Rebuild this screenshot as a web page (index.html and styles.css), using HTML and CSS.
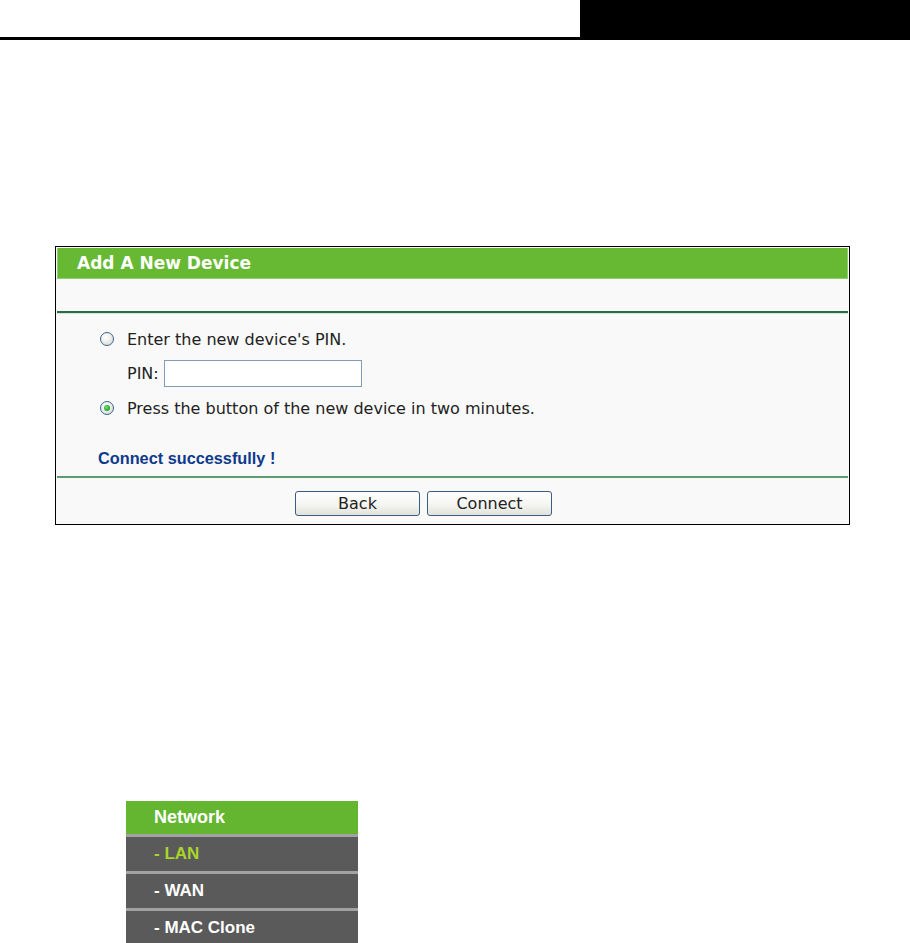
FILE: index.html
```html
<!DOCTYPE html>
<html>
<head>
<meta charset="utf-8">
<link rel="stylesheet" href="styles.css">
</head>
<body>
<div class="topbar">
  <div class="rule"></div>
  <div class="tab"></div>
</div>

<div class="panel">
  <div class="panel-head">Add A New Device</div>
  <div class="panel-sub"></div>
  <div class="options">
    <div class="opt-row">
      <span class="radio"></span>
      <span class="opt-text">Enter the new device's PIN.</span>
    </div>
    <div class="opt-row pin-row">
      <span class="opt-text">PIN:</span>
      <span class="pin-input"></span>
    </div>
    <div class="opt-row">
      <span class="radio checked"></span>
      <span class="opt-text">Press the button of the new device in two minutes.</span>
    </div>
  </div>
  <div class="status">Connect successfully !</div>
  <div class="actions">
    <button class="btn">Back</button>
    <button class="btn">Connect</button>
  </div>
</div>

<div class="menu">
  <div class="menu-head">Network</div>
  <div class="menu-item active">- LAN</div>
  <div class="menu-item">- WAN</div>
  <div class="menu-item">- MAC Clone</div>
</div>
</body>
</html>
```

FILE: styles.css
```css
html, body {
  margin: 0;
  padding: 0;
  background: #ffffff;
}

body {
  font-family: "DejaVu Sans", sans-serif;
  font-size: 16px;
  color: #222222;
  overflow: hidden;
}

.topbar {
  display: flex;
  height: 40px;
}

.topbar .rule {
  width: 580px;
  height: 37px;
  border-bottom: 3px solid #000;
}

.topbar .tab {
  width: 330px;
  height: 40px;
  background: #000;
}

.panel {
  box-sizing: border-box;
  width: 795px;
  margin: 206px 0 0 55px;
  border: 1px solid #000;
  padding: 1px;
  background: #f9f9f9;
}

.panel-head {
  height: 31px;
  display: flex;
  align-items: center;
  padding-left: 19px;
  background: #67b934;
  color: #ffffff;
  font-family: "DejaVu Sans", sans-serif;
  font-weight: bold;
  font-size: 17px;
  border: 1px solid #8fd06a;
  border-top: none;
  box-sizing: border-box;
}

.panel-sub {
  height: 32px;
  border-bottom: 2px solid #2b6b4c;
  box-shadow: 0 1px 0 #cfe6d6;
}

.options {
  display: flex;
  flex-direction: column;
  gap: 4.5px;
  padding: 11px 0 0 43px;
}

.opt-row {
  height: 30px;
  display: flex;
  align-items: center;
}

.pin-row {
  padding-left: 27px;
}

.radio {
  box-sizing: border-box;
  width: 14px;
  height: 14px;
  border-radius: 50%;
  border: 1px solid #3a6690;
  background: radial-gradient(circle at 40% 35%, #ffffff 0%, #eeeeea 45%, #cfcfc8 100%);
  margin-right: 13px;
  display: flex;
  align-items: center;
  justify-content: center;
}

.radio.checked::after {
  content: "";
  width: 6px;
  height: 6px;
  border-radius: 50%;
  background: radial-gradient(circle at 40% 40%, #6ee06a 0%, #22a52a 70%);
}

.opt-text {
  white-space: nowrap;
}

.pin-input {
  box-sizing: border-box;
  width: 198px;
  height: 27px;
  margin-left: 5px;
  border: 1px solid #7f9db9;
  background: #ffffff;
}

.status {
  margin-top: 25px;
  padding-left: 41px;
  height: 20px;
  line-height: 20px;
  font-family: "Liberation Sans", Arial, sans-serif;
  font-weight: bold;
  font-size: 16.3px;
  color: #0f3a8c;
}

.actions {
  margin-top: 8px;
  border-top: 2px solid #5c9d70;
  padding: 13px 0 7px 238px;
  display: flex;
  gap: 7px;
}

.btn {
  box-sizing: border-box;
  width: 125px;
  height: 25px;
  padding: 0;
  border: 1px solid #3e5b80;
  border-radius: 3px;
  background: linear-gradient(#ffffff 0%, #f6f6f3 50%, #e3e3dc 100%);
  font-family: "DejaVu Sans", sans-serif;
  font-size: 16px;
  color: #222222;
  line-height: 23px;
}

.menu {
  width: 232px;
  margin: 276px 0 0 126px;
  font-family: "Liberation Sans", Arial, sans-serif;
  font-weight: bold;
  font-size: 17px;
  color: #ffffff;
}

.menu-head {
  height: 33px;
  display: flex;
  align-items: center;
  padding-left: 28px;
  background: #64b631;
  font-size: 18px;
}

.menu-item {
  box-sizing: border-box;
  height: 37px;
  display: flex;
  align-items: center;
  padding-left: 28px;
  background: #5a5a5a;
  border-top: 3px solid #a2a2a2;
}

.menu-item.active {
  color: #a9d42c;
}
```
